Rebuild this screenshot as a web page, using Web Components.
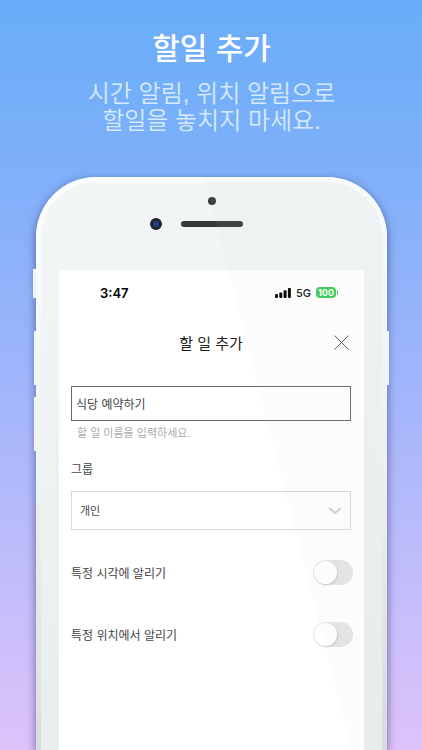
<!DOCTYPE html>
<html lang="ko">
<head>
<meta charset="utf-8">
<meta name="viewport" content="width=device-width, initial-scale=1">
<title>할일 추가</title>
<style>
    body {
        margin: 0;
        font-family: "Liberation Sans", "Noto Sans CJK KR", sans-serif;
        color: #444;
    }
</style>
</head>
<body>
<promo-page>
    <span slot="title">할일 추가</span>
    <span slot="text">시간 알림, 위치 알림으로<br>할일을 놓치지 마세요.</span>
    <phone-frame>
        <status-bar time="3:47" network="5G" battery="100"></status-bar>
        <todo-form></todo-form>
    </phone-frame>
</promo-page>

<script>
const define = (name, template) => customElements.define(name,
    class extends HTMLElement {
        constructor() {
            super();
            this.attachShadow({ mode: 'open' });
            this.shadowRoot.innerHTML = template(this);
        }
    });

define('promo-page', () => `<style>
    :host {
        display: flex;
        flex-direction: column;
        box-sizing: border-box;
        height: 100vh;
        min-height: 700px;
        padding: 31px 35px 0 36px;
        overflow: hidden;
        background: linear-gradient(#69adf8 0%, #7eb0f9 22%, #9fb5fb 50%, #c5befb 80%, #dec2fa 100%);
    }
    header {
        text-align: center;
        height: 146px;
    }
    h1 {
        margin: 0 0 13px;
        font-size: 30px;
        line-height: 36px;
        font-weight: 500;
        color: #fff;
    }
    p {
        margin: 0;
        font-size: 24px;
        line-height: 27px;
        font-weight: 350;
        color: #d6eaff;
    }
</style>
<header>
    <h1><slot name="title"></slot></h1>
    <p><slot name="text"></slot></p>
</header>
<slot></slot>`);

define('phone-frame', () => `<style>
    :host {
        flex: 1;
        display: flex;
        flex-direction: column;
        position: relative;
        box-sizing: border-box;
        padding: 20px 23px 0;
        border-radius: 60px 60px 0 0;
        background: linear-gradient(#f2f6f7, #e8eeee);
        box-shadow: 0 3px 10px rgba(40, 40, 90, 0.6);
    }
    .rim {
        position: absolute;
        inset: 0;
        border-radius: inherit;
        border: solid 5px transparent;
        border-bottom: 0;
        background: linear-gradient(#fbfeff, #eff3f4 50%, #d9dddd) border-box;
        mask: linear-gradient(#000 0 0) padding-box, linear-gradient(#000 0 0);
        mask-composite: exclude;
    }
    .sensor {
        align-self: center;
        width: 8px;
        height: 8px;
        border-radius: 4px;
        background: #38393b;
    }
    .ear {
        display: grid;
        grid-template-columns: 12px 62px 12px;
        gap: 19px;
        justify-content: center;
        align-items: center;
        margin: 13px 0 40px;
    }
    .camera {
        box-sizing: border-box;
        height: 12px;
        border: 3px solid #22272e;
        border-radius: 6px;
        background: #2b3b86;
    }
    .speaker {
        height: 6px;
        border-radius: 3px;
        background: #38393b;
    }
    .screen {
        flex: 1;
        background: #fff;
    }
    .key {
        position: absolute;
        width: 2px;
        height: 54px;
        background: #f0f3f7;
    }
    .mute { left: -3px; top: 92px; width: 3px; height: 29px; }
    .up { left: -2px; top: 154px; }
    .down { left: -2px; top: 220px; }
    .power { right: -2px; top: 154px; }
    .glare {
        position: absolute;
        inset: 0;
        border-radius: inherit;
        background: rgba(200, 200, 200, 0.06);
        clip-path: polygon(48% 0, 100% 0, 100% 100%, 90% 100%);
        pointer-events: none;
    }
</style>
<div class="rim"></div>
<div class="sensor"></div>
<div class="ear"><div class="camera"></div><div class="speaker"></div></div>
<div class="screen"><slot></slot></div>
<i class="key mute"></i><i class="key up"></i><i class="key down"></i><i class="key power"></i>
<div class="glare"></div>`);

define('status-bar', (el) => `<style>
    :host {
        display: flex;
        align-items: center;
        gap: 5px;
        height: 45px;
        padding: 0 26px 0 41px;
        font-family: Inter, sans-serif;
        font-size: 11px;
        font-weight: 500;
        color: #111;
    }
    time {
        flex: 1;
        font-size: 13px;
        font-weight: 600;
        color: #000;
    }
    .battery {
        display: flex;
        align-items: center;
        gap: 1px;
    }
    .battery b {
        padding: 0 2px;
        border-radius: 4px;
        background: #3ccb5a;
        color: #fff;
        font-size: 9px;
        line-height: 11px;
        font-weight: 700;
    }
    .battery i {
        width: 1px;
        height: 4px;
        background: #3ccb5a;
    }
</style>
<time>${el.getAttribute('time')}</time>
<svg width="16" height="10" viewBox="0 0 16 10" fill="#000" aria-hidden="true">
    <rect x="0" y="6" width="3" height="4" rx="1"/>
    <rect x="4.3" y="4.5" width="3" height="5.5" rx="1"/>
    <rect x="8.6" y="2.3" width="3" height="7.7" rx="1"/>
    <rect x="12.9" y="0" width="3" height="10" rx="1"/>
</svg>
<span>${el.getAttribute('network')}</span>
<span class="battery"><b>${el.getAttribute('battery')}</b><i></i></span>`);

define('toggle-row', () => `<style>
    :host {
        display: block;
    }
    label {
        display: flex;
        align-items: center;
        justify-content: space-between;
        height: 25px;
        font-size: 12px;
    }
    input {
        appearance: none;
        display: flex;
        box-sizing: border-box;
        width: 40px;
        height: 25px;
        margin: 0 -2px 0 0;
        padding: 1px;
        border-radius: 13px;
        background: #e6e6e8;
    }
    input::before {
        content: "";
        width: 23px;
        height: 23px;
        border-radius: 12px;
        background: #fff;
        box-shadow: 1px 1px 2px rgba(0, 0, 0, 0.12);
    }
    input:checked {
        justify-content: flex-end;
        background: #3ccb5a;
    }
</style>
<label><slot></slot><input type="checkbox" role="switch"></label>`);

define('todo-form', () => `<style>
    :host {
        display: block;
        padding: 0 13px 0 12px;
    }
    header {
        display: grid;
        grid-template-columns: 1fr auto 1fr;
        align-items: center;
        height: 54px;
        margin-bottom: 17px;
    }
    h2 {
        grid-column: 2;
        margin: 0;
        font-size: 15px;
        font-weight: 400;
        color: #222;
    }
    button {
        justify-self: end;
        display: flex;
        padding: 2px;
        border: 0;
        background: none;
    }
    input, select {
        box-sizing: border-box;
        display: block;
        width: 100%;
        margin: 0;
        font: inherit;
        color: inherit;
        border-radius: 0;
        background: none;
    }
    input {
        height: 35px;
        padding: 0 4px;
        border: 1px solid #666;
        font-size: 12px;
    }
    .hint {
        margin: 3px 0 18px;
        padding-left: 6px;
        font-size: 11px;
        line-height: 18px;
        color: #aaa;
    }
    .label {
        display: block;
        margin-bottom: 11px;
        font-size: 12px;
        line-height: 20px;
    }
    .select {
        display: grid;
        align-items: center;
        margin-bottom: 30px;
    }
    .select > * {
        grid-area: 1 / 1;
    }
    select {
        appearance: none;
        height: 39px;
        padding: 0 8px;
        border: 1px solid #d8d8d8;
        font-size: 11px;
    }
    .select svg {
        justify-self: end;
        margin-right: 9px;
        pointer-events: none;
    }
    toggle-row + toggle-row {
        margin-top: 37px;
    }
</style>
<header>
    <h2>할 일 추가</h2>
    <button type="button" aria-label="닫기">
        <svg width="15" height="15" viewBox="0 0 15 15" fill="none" stroke="#555" stroke-width="1"><path d="M.5 .5l14 14M14.5 .5l-14 14"/></svg>
    </button>
</header>
<input id="name" type="text" value="식당 예약하기" aria-label="할 일 이름" aria-describedby="hint">
<div class="hint" id="hint">할 일 이름을 입력하세요.</div>
<label class="label" for="group">그룹</label>
<div class="select">
    <select id="group"><option>개인</option></select>
    <svg width="14" height="8" viewBox="0 0 14 8" fill="none" stroke="#d0d0d4" stroke-width="2"><path d="M1 1l6 5 6-5"/></svg>
</div>
<toggle-row>특정 시각에 알리기</toggle-row>
<toggle-row>특정 위치에서 알리기</toggle-row>`);
</script>
</body>
</html>
